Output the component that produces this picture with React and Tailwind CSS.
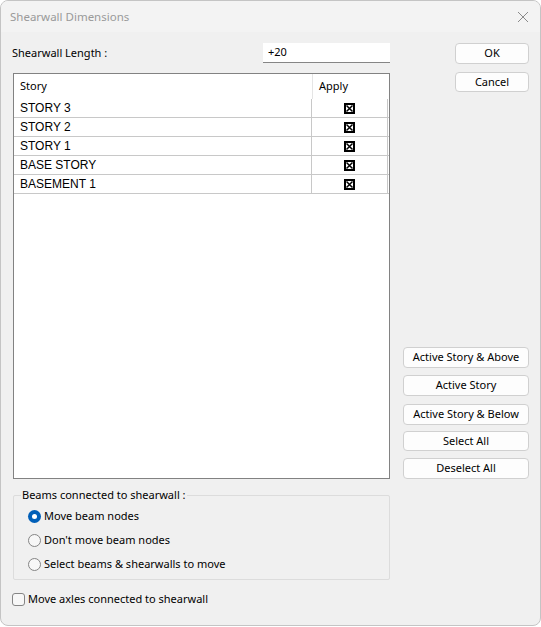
const stories = ["STORY 3", "STORY 2", "STORY 1", "BASE STORY", "BASEMENT 1"];

function XBox() {
  return (
    <svg width="11" height="11" viewBox="0 0 11 11">
      <rect x="1" y="1" width="9" height="9" fill="white" stroke="black" strokeWidth="2" />
      <path d="M2.5 2.5 L8.5 8.5 M8.5 2.5 L2.5 8.5" stroke="black" strokeWidth="1.5" />
    </svg>
  );
}

function Btn({ children, className = "" }) {
  return (
    <div
      className={`flex items-center justify-center rounded-[4px] border border-[#d0d0d0] bg-[#fdfdfd] text-[11px] text-black ${className}`}
    >
      {children}
    </div>
  );
}

function Radio({ checked, label }) {
  return (
    <div className="flex h-[24px] items-center">
      {checked ? (
        <span className="flex h-[13px] w-[13px] items-center justify-center rounded-full bg-[#005fb8]">
          <span className="h-[5px] w-[5px] rounded-full bg-white" />
        </span>
      ) : (
        <span className="h-[13px] w-[13px] rounded-full border border-[#858585] bg-[#f7f7f7]" />
      )}
      <span className="ml-[3px] text-[11px] text-[#000]">{label}</span>
    </div>
  );
}

export default function App() {
  return (
    <div
      className="h-[627px] w-[541px] bg-white"
      style={{ fontFamily: '"Segoe UI", "Noto Sans", sans-serif' }}
    >
      <div className="flex h-[626px] w-[541px] flex-col overflow-hidden rounded-[8px] border border-[#c4c4c4] bg-[#f0f0f0]">
        {/* title bar */}
        <div className="flex h-[31px] shrink-0 items-center bg-[#f3f3f3] pl-[9px] pr-[10px]">
          <span className="text-[11.5px] text-[#9a9a9a]">Shearwall Dimensions</span>
          <svg className="ml-auto" width="14" height="14" viewBox="0 0 14 14">
            <path d="M2 2 L12 12 M12 2 L2 12" stroke="#8a8a8a" strokeWidth="1" />
          </svg>
        </div>

        {/* body */}
        <div className="flex flex-1">
          <div className="ml-[11px] flex w-[378px] flex-col">
            <div className="mt-[11px] flex h-[20px] items-center">
              <span className="text-[11px] text-black">Shearwall Length :</span>
              <div className="ml-auto flex h-[20px] w-[127px] items-center border-b border-[#868686] bg-white pl-[5px] text-[11px] text-black">
                +20
              </div>
            </div>

            {/* table */}
            <div className="mt-[10px] ml-[1px] flex h-[406px] w-[377px] flex-col border border-[#828282] bg-white">
              <div className="flex h-[25px] shrink-0 items-center text-[11px] text-black">
                <span className="w-[298px] pl-[6px]">Story</span>
                <span className="flex h-full items-center border-l border-[#e5e5e5] pl-[6px]">Apply</span>
              </div>
              {stories.map((s) => (
                <div
                  key={s}
                  className="flex h-[19px] w-[375px] shrink-0 border-b border-[#c8c8c8] text-[12px] text-black"
                  style={{ fontFamily: '"Liberation Sans", Arial, sans-serif' }}
                >
                  <span className="flex w-[297px] items-center pl-[6px]">{s}</span>
                  <span className="flex w-[77px] items-center justify-center border-x border-[#c8c8c8]">
                    <XBox />
                  </span>
                </div>
              ))}
            </div>

            {/* group box */}
            <div className="relative mt-[16px] ml-[1px] h-[85px] w-[377px] rounded-[2px] border border-[#dcdcdc]">
              <span className="absolute left-[7px] top-[-9px] bg-[#f0f0f0] px-[1px] text-[11px] leading-[16px] text-black">
                Beams connected to shearwall :
              </span>
              <div className="ml-[14px] mt-[8px] flex flex-col">
                <Radio checked label="Move beam nodes" />
                <Radio label="Don't move beam nodes" />
                <Radio label="Select beams & shearwalls to move" />
              </div>
            </div>

            <div className="mt-[11px] flex items-center">
              <span className="h-[13px] w-[13px] rounded-[3px] border border-[#858585] bg-[#f7f7f7]" />
              <span className="ml-[3px] text-[11px] text-black">Move axles connected to shearwall</span>
            </div>
          </div>

          {/* right column */}
          <div className="ml-[13px] flex w-[126px] flex-col items-end">
            <Btn className="mt-[11px] h-[21px] w-[74px]">OK</Btn>
            <Btn className="mt-[8px] h-[20px] w-[74px]">Cancel</Btn>
            <Btn className="mt-[255px] h-[21px] w-[126px]">Active Story &amp; Above</Btn>
            <Btn className="mt-[7px] h-[21px] w-[126px]">Active Story</Btn>
            <Btn className="mt-[8px] h-[21px] w-[126px]">Active Story &amp; Below</Btn>
            <Btn className="mt-[6px] h-[20px] w-[126px]">Select All</Btn>
            <Btn className="mt-[7px] h-[21px] w-[126px]">Deselect All</Btn>
          </div>
        </div>
      </div>
    </div>
  );
}
